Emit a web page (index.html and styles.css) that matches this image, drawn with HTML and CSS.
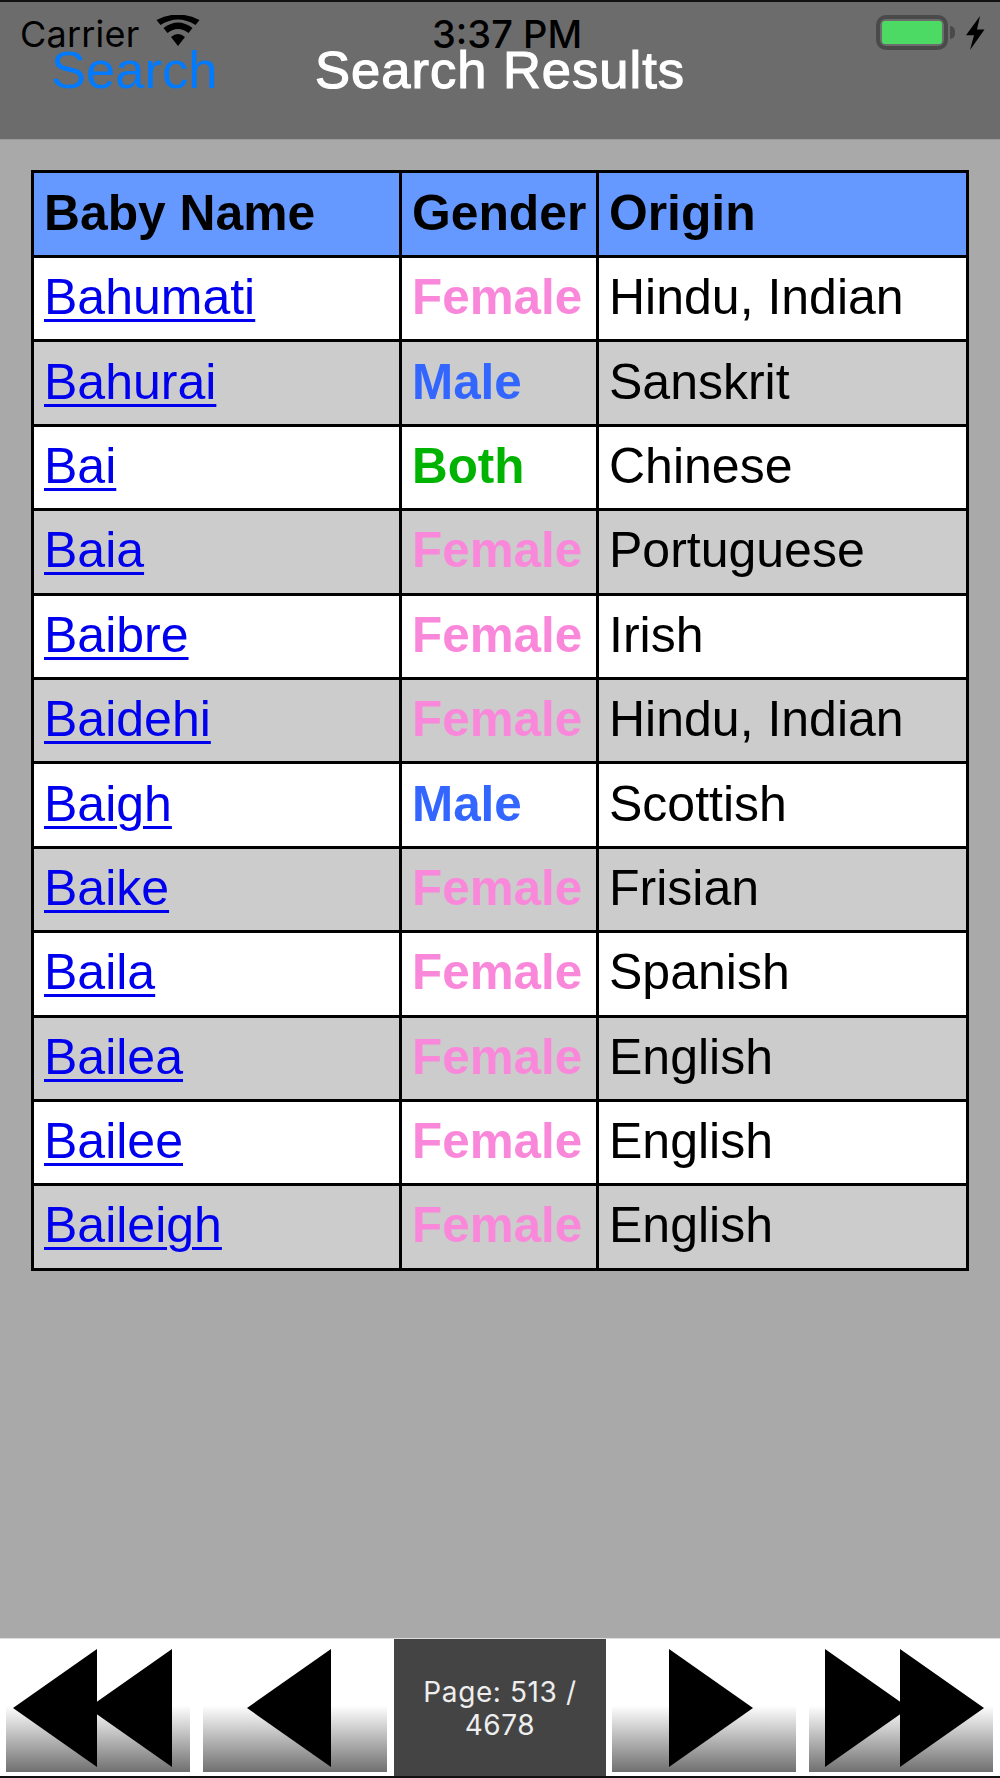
FILE: index.html
```html
<!DOCTYPE html>
<html lang="en">
<head>
<meta charset="utf-8">
<title>Search Results</title>
<link rel="stylesheet" href="styles.css">
</head>
<body>
<div class="app">
  <header class="nav">
    <div class="status">
      <div class="status-left">
        <span class="carrier">Carrier</span>
        <svg class="wifi" width="44" height="32" viewBox="0 0 44 32"><path d="M22 31 L15 22 Q22 16 29 22 Z M11.500 18 L7.500 13 Q22 2 36.500 13 L32.500 18 Q22 10 11.500 18 Z M4.500 10 L0.500 5 Q22 -6 43.500 5 L39.500 10 Q22 -1 4.500 10 Z" fill="#000"/></svg>
      </div>
      <span class="clock">3:37 PM</span>
      <div class="status-right">
        <span class="battery"><span class="battery-fill"></span></span>
        <span class="battery-cap"></span>
        <svg class="bolt" width="19" height="34" viewBox="0 0 19 32" preserveAspectRatio="none"><path d="M14 0 L0 18 L8 18 L4 32 L18.500 12.800 L11 12.800 Z" fill="#000"/></svg>
      </div>
    </div>
    <div class="titlebar">
      <a class="back">Search</a>
      <h1 class="title">Search Results</h1>
    </div>
  </header>

  <main class="content">
    <table class="names">
      <colgroup><col class="c1"><col class="c2"><col class="c3"></colgroup>
      <thead>
        <tr><th>Baby Name</th><th>Gender</th><th>Origin</th></tr>
      </thead>
      <tbody>
        <tr><td><a href="#">Bahumati</a></td><td class="g f">Female</td><td>Hindu, Indian</td></tr>
        <tr><td><a href="#">Bahurai</a></td><td class="g m">Male</td><td>Sanskrit</td></tr>
        <tr><td><a href="#">Bai</a></td><td class="g b">Both</td><td>Chinese</td></tr>
        <tr><td><a href="#">Baia</a></td><td class="g f">Female</td><td>Portuguese</td></tr>
        <tr><td><a href="#">Baibre</a></td><td class="g f">Female</td><td>Irish</td></tr>
        <tr><td><a href="#">Baidehi</a></td><td class="g f">Female</td><td>Hindu, Indian</td></tr>
        <tr><td><a href="#">Baigh</a></td><td class="g m">Male</td><td>Scottish</td></tr>
        <tr><td><a href="#">Baike</a></td><td class="g f">Female</td><td>Frisian</td></tr>
        <tr><td><a href="#">Baila</a></td><td class="g f">Female</td><td>Spanish</td></tr>
        <tr><td><a href="#">Bailea</a></td><td class="g f">Female</td><td>English</td></tr>
        <tr><td><a href="#">Bailee</a></td><td class="g f">Female</td><td>English</td></tr>
        <tr><td><a href="#">Baileigh</a></td><td class="g f">Female</td><td>English</td></tr>
      </tbody>
    </table>
  </main>

  <footer class="pager">
    <button class="pg pg-first"><svg class="ic" viewBox="0 0 184 123"><path d="M7 59 L91 0 V118 Z M82 59 L166 0 V118 Z"/></svg></button>
    <button class="pg pg-prev"><svg class="ic" viewBox="0 0 184 123"><path d="M44 59 L128 0 V118 Z"/></svg></button>
    <div class="page-label">Page: 513 /<br>4678</div>
    <button class="pg pg-next"><svg class="ic" viewBox="0 0 184 123"><path d="M57 0 L141 59 L57 118 Z"/></svg></button>
    <button class="pg pg-last"><svg class="ic" viewBox="0 0 184 123"><path d="M16 0 L100 59 L16 118 Z M91 0 L175 59 L91 118 Z"/></svg></button>
  </footer>
</div>
</body>
</html>
```
FILE: styles.css
```css
* { box-sizing: border-box; }
html, body { margin: 0; padding: 0; }
body { font-family: "Liberation Sans", Arial, sans-serif; background: #a9a9a9; }
.app { width: 1000px; height: 1778px; display: flex; flex-direction: column; }

.nav { height: 140px; flex: none; background: #6c6c6c; border-top: 2px solid #111; border-bottom: 1px solid #999; }
.status { height: 39px; padding: 11px 15px 0 20px; display: flex; align-items: flex-start; justify-content: space-between; position: relative; color: #000; }
.status-left { display: flex; align-items: flex-start; gap: 17px; }
.carrier { font-family: "Inter", "Liberation Sans", sans-serif; font-size: 36px; line-height: 42px; letter-spacing: 0.2px; }
.wifi { margin-top: 2px; }
.clock { position: absolute; left: 432px; top: 11px; font-family: "Inter", "Liberation Sans", sans-serif; font-size: 38px; line-height: 42px; font-weight: 500; }
.status-right { display: flex; align-items: center; margin-top: 2px; }
.battery { width: 72px; height: 35px; border: 4px solid #4a4a4a; border-radius: 10px; padding: 2px; display: block; }
.battery-fill { display: block; width: 100%; height: 100%; background: #4cd964; border-radius: 3px; }
.battery-cap { width: 5px; height: 13px; background: #4a4a4a; border-radius: 0 6px 6px 0; margin: 0 11px 0 2px; }
.titlebar { display: flex; align-items: flex-start; position: relative; height: 60px; padding-left: 51px; }
.back { font-size: 52.500px; line-height: 58px; color: #007aff; }
.title { position: absolute; left: 315px; top: 0; margin: 0; font-size: 52.500px; line-height: 58px; font-weight: 400; letter-spacing: 1px; color: #fff; -webkit-text-stroke: 1.2px #fff; }

.content { flex: 1; padding: 30px 30px 0 31px; }
.names { width: 938px; table-layout: fixed; border-collapse: collapse; border: 3px solid #000; font-size: 50px; }
.c1 { width: 368px; }
.c2 { width: 197px; }
.names th, .names td { height: 84.4px; border: 3px solid #000; padding: 0 0 3px 10px; text-align: left; white-space: nowrap; color: #000; line-height: 56px; background: #fff; }
.names th { height: 85px; background: #6699ff; font-weight: 700; font-size: 49.800px; }
.names tbody tr:nth-child(even) td { background: #ccc; }
.names a { color: #0000ee; text-decoration: underline; text-decoration-thickness: 2.500px; text-underline-offset: 5px; }
.names .g { font-weight: 700; font-size: 49.400px; }
.names .f { color: #fa88da; }
.names .m { color: #3366ff; }
.names .b { color: #00b300; }

.pager { flex: none; height: 140px; display: flex; background: #fff; border-top: 1px solid #ddd; border-bottom: 2px solid #111; position: relative; padding-bottom: 4px; }
.pg { flex: none; width: 184px; height: 100%; margin: 0 0 0 6px; padding: 0; border: 0; background: linear-gradient(#fff 0, #fff 50%, #707070 100%); position: relative; }
.pg-prev { margin-left: 13px; }
.pg-next { margin-left: 6px; }
.pg-last { margin-left: 13px; }
.ic { display: block; width: 184px; height: 123px; margin-top: 9px; fill: #000; }
.page-label { flex: none; width: 212px; margin: 0 0 -4px 7px; background: #444; color: #eee; font-family: "Inter", "Liberation Sans", sans-serif; font-size: 28px; line-height: 33px; text-align: center; display: flex; align-items: center; justify-content: center; padding-top: 2px; letter-spacing: 0.6px; }
```
